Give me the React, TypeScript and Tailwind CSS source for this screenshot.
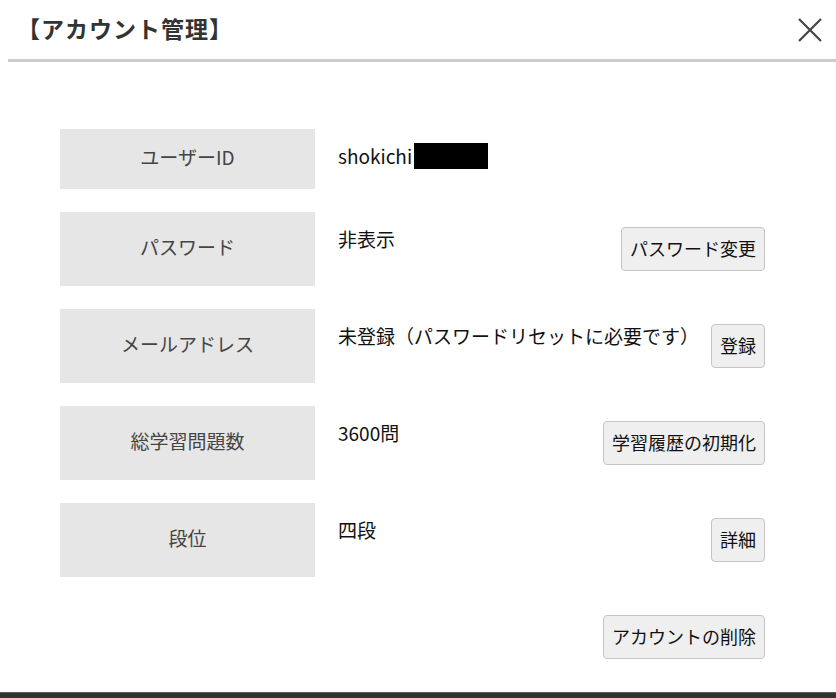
const font = "font-['Meiryo','Noto_Sans_CJK_JP','Noto_Sans',sans-serif]";

type Row = {
    label: string;
    value: React.ReactNode;
    action?: string;
};

const rows: Row[] = [
    {
        label: "ユーザーID",
        value: (
            <span className="flex h-[24px] items-center">
                shokichi
                <span className="ml-[2px] inline-block h-[26px] w-[74px] shrink-0 bg-black" />
            </span>
        ),
    },
    { label: "パスワード", value: "非表示", action: "パスワード変更" },
    { label: "メールアドレス", value: "未登録（パスワードリセットに必要です）", action: "登録" },
    { label: "総学習問題数", value: "3600問", action: "学習履歴の初期化" },
    { label: "段位", value: "四段", action: "詳細" },
];

const ActionButton = ({ children }: { children: React.ReactNode }) => (
    <button className="h-[44px] shrink-0 rounded-[4px] border border-[#c4c4c4] bg-[#efefef] px-[8px] pb-[2px] text-[18px] leading-none text-[#111]">
        {children}
    </button>
);

export default function App() {
    return (
        <div className={`${font} flex h-[698px] w-[836px] flex-col bg-white`}>
            <header className="flex h-[59px] items-center justify-between pr-[13px] pl-[17px]">
                <h1 className="pb-[2px] text-[23px] font-bold tracking-[1px] text-[#333]">【アカウント管理】</h1>
                <button aria-label="閉じる" className="text-[#444]">
                    <svg width="26" height="26" viewBox="0 0 26 26" fill="none" stroke="currentColor" strokeWidth="2.2">
                        <path d="M2 2 L24 24 M24 2 L2 24" />
                    </svg>
                </button>
            </header>
            <div className="ml-[8px] h-[3px] bg-[#cccccc]" />

            <main className="flex flex-col gap-[23px] pt-[67px] pr-[71px] pl-[60px]">
                {rows.map((row) => (
                    <div key={row.label} className="flex">
                        <div className="flex w-[255px] shrink-0 items-center justify-center bg-[#e6e6e6] pb-[3px] text-[19px] text-[#444]">
                            {row.label}
                        </div>
                        <div className="ml-[23px] flex flex-1 items-start justify-between py-[15px] text-[19px] text-[#111]">
                            <span className="h-[30px] pb-[6px] leading-[24px]">{row.value}</span>
                            {row.action && <ActionButton>{row.action}</ActionButton>}
                        </div>
                    </div>
                ))}
            </main>

            <div className="mt-[38px] flex justify-end pr-[71px]">
                <ActionButton>アカウントの削除</ActionButton>
            </div>

            <div className="mt-auto h-[6px] border-t border-[#5a5a5a] bg-[#333]" />
        </div>
    );
}
